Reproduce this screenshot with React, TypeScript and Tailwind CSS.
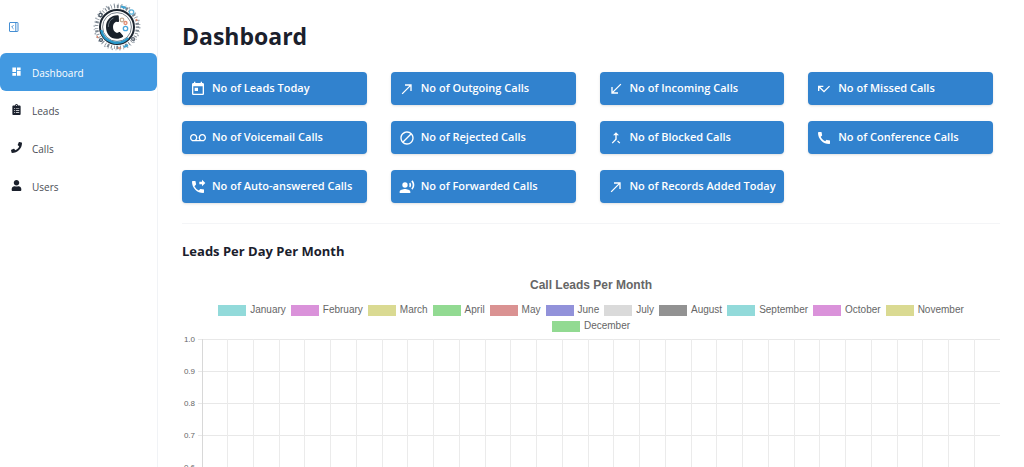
import React from "react";
import { IconType } from "react-icons";
import { FaClipboardList, FaPhone, FaUser } from "react-icons/fa";
import {
  MdCall,
  MdCallMade,
  MdCallMerge,
  MdCallMissed,
  MdCallReceived,
  MdDashboard,
  MdDoNotDisturbAlt,
  MdPhoneForwarded,
  MdRecordVoiceOver,
  MdToday,
  MdVoicemail,
} from "react-icons/md";

type Item = { label: string; icon: IconType };

const navItems: Item[] = [
  { label: "Dashboard", icon: MdDashboard },
  { label: "Leads", icon: FaClipboardList },
  { label: "Calls", icon: FaPhone },
  { label: "Users", icon: FaUser },
];

const stats: Item[] = [
  { label: "No of Leads Today", icon: MdToday },
  { label: "No of Outgoing Calls", icon: MdCallMade },
  { label: "No of Incoming Calls", icon: MdCallReceived },
  { label: "No of Missed Calls", icon: MdCallMissed },
  { label: "No of Voicemail Calls", icon: MdVoicemail },
  { label: "No of Rejected Calls", icon: MdDoNotDisturbAlt },
  { label: "No of Blocked Calls", icon: MdCallMerge },
  { label: "No of Conference Calls", icon: MdCall },
  { label: "No of Auto-answered Calls", icon: MdPhoneForwarded },
  { label: "No of Forwarded Calls", icon: MdRecordVoiceOver },
  { label: "No of Records Added Today", icon: MdCallMade },
];

const months = [
  { name: "January", color: "bg-[#92dada]" },
  { name: "February", color: "bg-[#da92da]" },
  { name: "March", color: "bg-[#dada92]" },
  { name: "April", color: "bg-[#92da92]" },
  { name: "May", color: "bg-[#da9292]" },
  { name: "June", color: "bg-[#9292da]" },
  { name: "July", color: "bg-[#dadada]" },
  { name: "August", color: "bg-[#929292]" },
  { name: "September", color: "bg-[#92dada]" },
  { name: "October", color: "bg-[#da92da]" },
  { name: "November", color: "bg-[#dada92]" },
  { name: "December", color: "bg-[#92da92]" },
];

const DAYS = 31;
const ROW_HEIGHT = 32;
const ticks = ["1.0", "0.9", "0.8", "0.7", "0.6", "0.5", "0.4", "0.3", "0.2", "0.1", "0"];

const Logo = () => (
  <svg viewBox="0 0 48 50" className="h-[50px] w-12" role="img" aria-label="Logo">
    <g fill="none">
      <circle cx="24" cy="25" r="20.5" stroke="#7d8791" strokeWidth="3.5" strokeDasharray="1 1.8 2 1.6 .7 2.2" />
      <circle cx="24" cy="25" r="22.7" stroke="#a5aeb7" strokeWidth="1.6" strokeDasharray="1.5 3 .8 2.6" />
    </g>
    <circle cx="24" cy="25" r="17" fill="#fff" stroke="#1c2530" strokeWidth="2" />
    <circle cx="24" cy="25" r="14.4" fill="#fff" stroke="#55626e" strokeWidth=".8" />
    <path d="M8.2 28a16 16 0 0 0 27 8" fill="none" stroke="#2997c9" strokeWidth="2.4" />
    {/* handset */}
    <path
      d="M22 13.500c-5.500 1-9 5.500-9 11.500 0 7 4.500 11.800 10.500 11.800 2.500 0 4.500-.6 6.200-1.800.6-.5.600-1 .2-1.600l-2.600-3c-.5-.6-1-.6-1.700-.2l-1.600.8c-2.700-.9-4-3.200-4-6 0-2.600 1-4.300 3-5.300l2 .2c.7 0 1-.3 1-1l-.2-4.500c0-.8-.5-1.200-1.300-1.200z"
      fill="#18212b"
    />
    <path d="M20.500 16c-3.600 1.500-5.200 5-5.200 9" fill="none" stroke="#7e8993" strokeWidth=".8" />
    <g fill="#fff" strokeWidth="1.3">
      <circle cx="29" cy="18" r="1.8" stroke="#c3ac95" />
      <circle cx="32.5" cy="21" r="1.5" stroke="#e08c72" />
      <circle cx="32.5" cy="26.5" r="2.2" stroke="#4aa7dc" />
      <circle cx="38.5" cy="10" r="2.2" stroke="#62b5dc" />
      <circle cx="7.5" cy="13" r="1.6" stroke="#4c5966" />
      <circle cx="8" cy="38" r="1.4" stroke="#4c5966" />
      <circle cx="40" cy="37" r="1.4" stroke="#59636f" />
    </g>
    <path d="M28 4.500l5 1.500M31 45l4-2" stroke="#3fa4d4" strokeWidth="2" />
    <path d="M25 46h3M4 34l1 2M43 17l1 2" stroke="#df8568" strokeWidth="1.5" />
  </svg>
);

const CollapseIcon = () => (
  <svg viewBox="0 0 12 12" className="size-3" fill="none" stroke="currentColor" strokeWidth=".9" aria-hidden="true">
    <rect x="1.5" y="1.5" width="8.5" height="9" rx=".5" />
    <path d="M7.800 1.500v9M5.500 4.200 3.700 6l1.800 1.800" />
  </svg>
);

const Sidebar = () => (
  <aside className="w-[158px] shrink-0 border-r border-[#f1f3f6] bg-white">
    <div className="flex h-[53px] items-center justify-between pl-2 pr-4">
      <button type="button" aria-label="Collapse sidebar" className="text-[#3182ce]">
        <CollapseIcon />
      </button>
      <Logo />
    </div>
    <nav className="text-[10px]">
      {navItems.map(({ label, icon: Icon }, i) => (
        <a
          key={label}
          href="#"
          className={
            i === 0
              ? "flex h-[38px] items-center gap-2.5 rounded-md bg-[#4299e1] pl-[11px] pt-0.5 text-white"
              : "flex h-[38px] items-center gap-2.5 rounded-md pl-[11px] pt-0.5 text-[#4a4d55]"
          }
        >
          <Icon size={11} className={i === 0 ? "mb-1" : "mb-1 text-[#1a202c]"} />
          {label}
        </a>
      ))}
    </nav>
  </aside>
);

const StatCard = ({ label, icon: Icon }: Item) => (
  <div className="flex h-[33px] items-center gap-1.5 rounded bg-[#3182ce] pl-2 text-white shadow">
    <Icon size={16} className="shrink-0" />
    <span className="whitespace-nowrap text-[11px] font-semibold">{label}</span>
  </div>
);

const LeadsChart = () => (
  <div className="mt-4 font-['Liberation_Sans',sans-serif] text-[#666]">
    <h3 className="text-center text-xs font-bold">Call Leads Per Month</h3>
    <ul className="mt-[9px] flex flex-wrap justify-center gap-x-[5px] px-6 text-[10px] leading-4">
      {months.map(({ name, color }) => (
        <li key={name} className="flex items-center gap-1">
          <span className={`h-[11px] w-7 ${color}`} />
          {name}
        </li>
      ))}
    </ul>
    <div className="flex">
      <div className="w-[13px] text-[8px]">
        {ticks.map((tick) => (
          <div key={tick} className="flex h-8 items-start justify-end leading-3">
            {tick}
          </div>
        ))}
      </div>
      <svg className="ml-[3px] mt-[5px] h-[330px] flex-1" aria-hidden="true" shapeRendering="crispEdges">
        {ticks.map((tick, i) => (
          <line key={tick} x1="0" x2="100%" y1={i * ROW_HEIGHT + 0.5} y2={i * ROW_HEIGHT + 0.5} stroke="#e8e8e8" />
        ))}
        <svg x="4" width="100%" height="100%" overflow="visible">
          {Array.from({ length: DAYS }, (_, i) => (
            <line
              key={i}
              x1={`${(i * 99.5) / DAYS}%`}
              x2={`${(i * 99.5) / DAYS}%`}
              y1="0"
              y2={ROW_HEIGHT * 10 + 5}
              stroke={i === 0 ? "#d8d8d8" : "#ebebeb"}
            />
          ))}
        </svg>
      </svg>
    </div>
  </div>
);

const App = () => {
  return (
    <div className="flex h-screen bg-white font-['Open_Sans','Noto_Sans',sans-serif] text-[#1a202c]">
      <Sidebar />
      <main className="min-w-0 flex-1 overflow-y-auto px-6 pt-5 [scrollbar-width:none]">
        <h1 className="text-[23px] font-bold leading-8">Dashboard</h1>
        <section className="mr-[7px] mt-5 grid grid-cols-4 gap-x-6 gap-y-4">
          {stats.map((stat) => (
            <StatCard key={stat.label} {...stat} />
          ))}
        </section>
        <hr className="mt-5 border-[#f4f5f7]" />
        <h2 className="mt-[17px] text-[13px] font-bold leading-5">Leads Per Day Per Month</h2>
        <LeadsChart />
      </main>
    </div>
  );
};

export default App;
